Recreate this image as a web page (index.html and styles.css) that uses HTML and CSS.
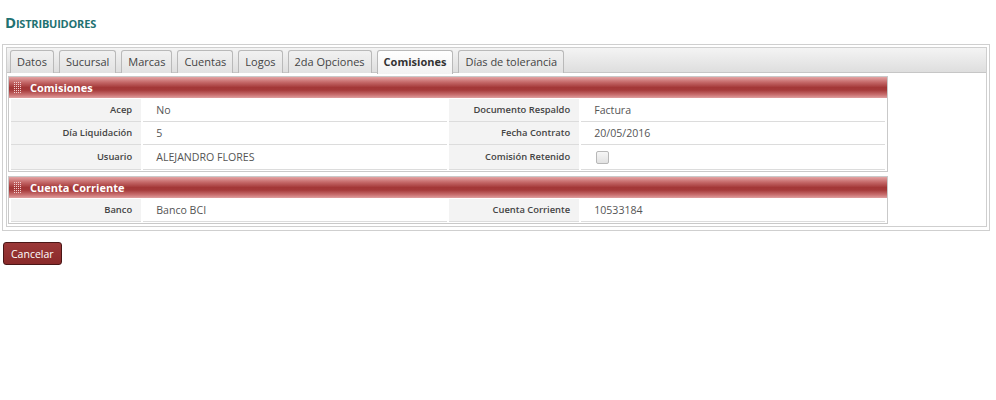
FILE: index.html
```html
<!DOCTYPE html>
<html lang="es">
<head>
<meta charset="utf-8">
<title>Distribuidores</title>
<link rel="stylesheet" href="styles.css">
</head>
<body>
<h1 class="page-title">Distribuidores</h1>
<div class="tabs">
  <div class="tabs-inner">
    <ul class="tab-nav">
      <li class="tab">Datos</li>
      <li class="tab">Sucursal</li>
      <li class="tab">Marcas</li>
      <li class="tab">Cuentas</li>
      <li class="tab">Logos</li>
      <li class="tab">2da Opciones</li>
      <li class="tab active">Comisiones</li>
      <li class="tab">Días de tolerancia</li>
    </ul>
    <div class="tab-panel">
      <div class="section">
        <div class="section-head">
          <svg class="grip" width="7" height="11" viewBox="0 0 7 11">
            <defs><pattern id="dots1" width="2" height="2" patternUnits="userSpaceOnUse"><rect width="1" height="1" fill="#f3d0d0"/></pattern></defs>
            <rect width="7" height="11" fill="url(#dots1)"/>
          </svg>Comisiones</div>
        <table class="form">
          <colgroup><col class="c-lab"><col class="c-val"><col class="c-lab"><col class="c-val"></colgroup>
          <tr><th>Acep</th><td>No</td><th>Documento Respaldo</th><td>Factura</td></tr>
          <tr><th>Día Liquidación</th><td>5</td><th>Fecha Contrato</th><td>20/05/2016</td></tr>
          <tr class="last"><th>Usuario</th><td>ALEJANDRO FLORES</td><th>Comisión Retenido</th><td><span class="check"></span></td></tr>
        </table>
      </div>
      <div class="section">
        <div class="section-head">
          <svg class="grip" width="7" height="11" viewBox="0 0 7 11">
            <defs><pattern id="dots2" width="2" height="2" patternUnits="userSpaceOnUse"><rect width="1" height="1" fill="#f3d0d0"/></pattern></defs>
            <rect width="7" height="11" fill="url(#dots2)"/>
          </svg>Cuenta Corriente</div>
        <table class="form">
          <colgroup><col class="c-lab"><col class="c-val"><col class="c-lab"><col class="c-val"></colgroup>
          <tr><th>Banco</th><td>Banco BCI</td><th>Cuenta Corriente</th><td>10533184</td></tr>
        </table>
      </div>
    </div>
  </div>
</div>
<button class="btn-cancel" type="button">Cancelar</button>
</body>
</html>
```
FILE: styles.css
```css
html, body {
  margin: 0;
  padding: 0;
  background: #fff;
}
body {
  font-family: "Open Sans", "DejaVu Sans", sans-serif;
  font-size: 11px;
  color: #555;
  padding: 0 0 0 2px;
}
.page-title {
  margin: 0;
  padding: 12px 0 0 3px;
  height: 32px;
  box-sizing: border-box;
  font-size: 15px;
  font-weight: 700;
  font-variant: small-caps;
  color: #1f7272;
  line-height: 20px;
  letter-spacing: -0.2px;
}
.tabs {
  width: 988px;
  box-sizing: border-box;
  border: 1px solid #cfcfcf;
  padding: 2px 2px 3px 3px;
  margin-top: 12px;
}
.tabs-inner {
  border: 1px solid #cfcfcf;
}
.tab-nav {
  list-style: none;
  margin: 0;
  padding: 2px 3px 0 3px;
  display: flex;
  gap: 5px;
  height: 25px;
  box-sizing: border-box;
  background: linear-gradient(#f4f4f4, #dedede);
  border-bottom: 1px solid #c6c6c6;
}
.tab {
  height: 22px;
  padding: 0 6px;
  border: 1px solid #b9b9b9;
  border-bottom: none;
  border-radius: 3px 3px 0 0;
  background: linear-gradient(#f1f1f1, #e2e2e2);
  line-height: 21px;
  color: #444;
  font-size: 11px;
}
.tab.active {
  background: linear-gradient(#ffffff, #f2f2f2);
  font-weight: 700;
  color: #333;
  height: 23px;
}
.tab-panel {
  padding: 3px 98px 2px 1px;
  display: flex;
  flex-direction: column;
  gap: 4px;
}
.section {
  border: 1px solid #c9c9c9;
}
.section-head {
  height: 21px;
  display: flex;
  align-items: center;
  gap: 9px;
  padding-left: 5px;
  color: #fff;
  font-weight: 700;
  font-size: 11px;
  background: linear-gradient(#e4a3a3 0%, #c46868 25%, #a33737 50%, #a53a3a 62%, #c97070 85%, #e0a0a0 100%);
}
.grip {
  display: block;
  flex: none;
}
.form {
  width: 100%;
  border-collapse: separate;
  border-spacing: 2px 0;
  margin: 1px 0 1px;
}
.c-lab { width: 15%; }
.c-val { width: 35%; }
.form tr {
  height: 23px;
}
.form tr.last {
  height: 25px;
}
.form th, .form td {
  border-bottom: 1px solid #dcdcdc;
  padding: 0;
  line-height: 14px;
}
.form th {
  background: #f3f3f3;
  text-align: right;
  font-weight: 600;
  font-size: 9.4px;
  color: #444;
  padding-right: 9px;
}
.form td {
  padding-left: 13px;
  color: #555;
  font-size: 10.6px;
}
.check {
  display: inline-block;
  width: 11px;
  height: 11px;
  border: 1px solid #b8b8b8;
  border-radius: 2px;
  background: linear-gradient(#f6f6f6, #e2e2e2);
  vertical-align: middle;
  margin-left: 2px;
}
.btn-cancel {
  display: block;
  margin-top: 11px;
  margin-left: 1px;
  height: 23px;
  padding: 0 7px;
  border: 1px solid #4a1616;
  border-radius: 3px;
  background: linear-gradient(#9b3838, #8a2a2a);
  color: #fff;
  font-family: "Open Sans", "DejaVu Sans", sans-serif;
  font-size: 10.5px;
  line-height: 20px;
}
```
